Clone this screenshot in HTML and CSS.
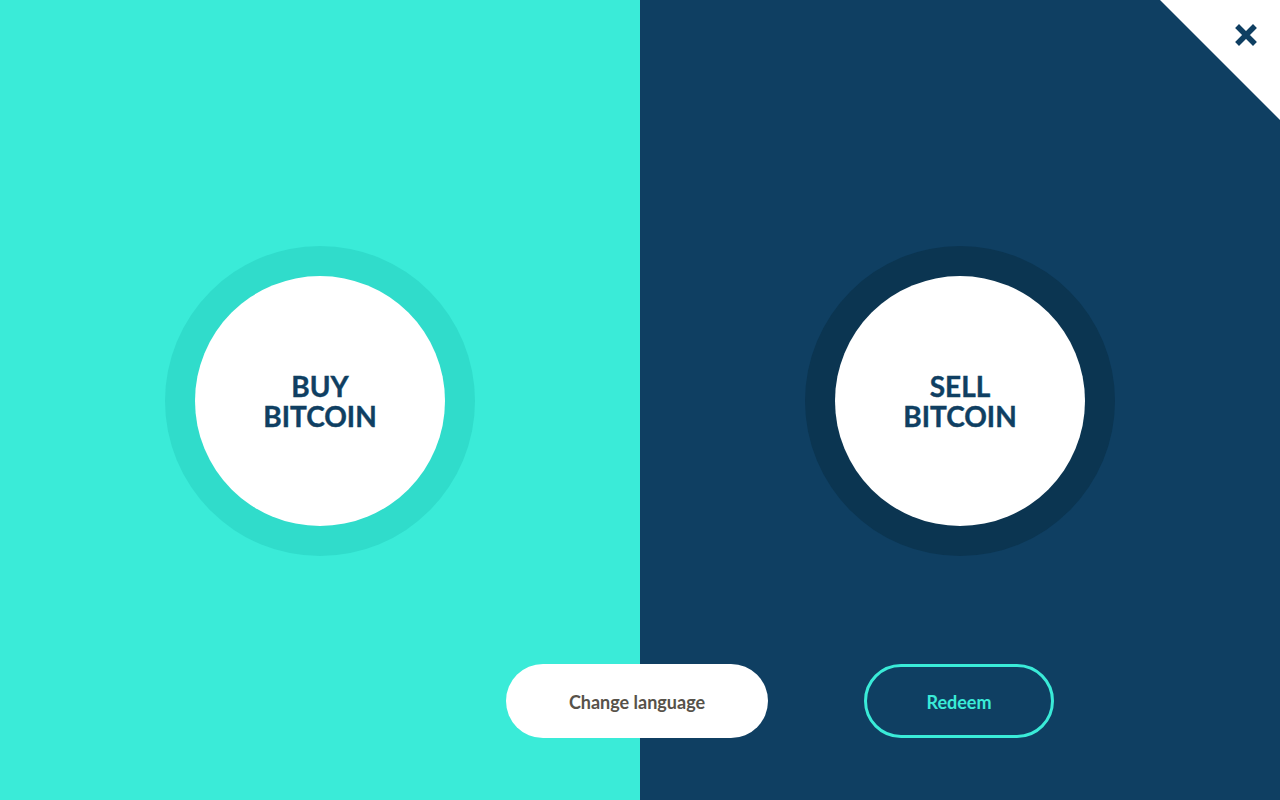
FILE: index.html
```html
<!DOCTYPE html>
<html>
<head>
<meta charset="utf-8">
<link rel="stylesheet" href="styles.css">
</head>
<body>
<div class="screen">
  <section class="panel panel-buy">
    <div class="ring ring-buy">
      <button class="disc"><span class="line">BUY</span><span class="line">BITCOIN</span></button>
    </div>
  </section>
  <section class="panel panel-sell">
    <div class="ring ring-sell">
      <button class="disc"><span class="line">SELL</span><span class="line">BITCOIN</span></button>
    </div>
  </section>
  <div class="corner">
    <svg class="close" viewBox="0 0 24 24" width="24" height="24">
      <path d="M5 5 L19 19 M19 5 L5 19" stroke="#0f3f62" stroke-width="5.5" stroke-linecap="square" fill="none"/>
    </svg>
  </div>
  <div class="actions">
    <button class="btn btn-lang">Change language</button>
    <button class="btn btn-redeem">Redeem</button>
  </div>
</div>
</body>
</html>
```
FILE: styles.css
```css
* { box-sizing: border-box; }
html, body { margin: 0; padding: 0; }
body {
  width: 1280px;
  height: 800px;
  overflow: hidden;
  font-family: "Lato", "Open Sans", sans-serif;
}
.screen {
  position: relative;
  width: 1280px;
  height: 800px;
  display: grid;
  grid-template-columns: 640px 640px;
}
.panel {
  display: flex;
  align-items: center;
  justify-content: center;
  height: 800px;
  padding-top: 1px;
}
.panel-buy { background: #3aebd8; }
.panel-sell { background: #0f3f62; }
.ring {
  width: 310px;
  height: 310px;
  border-radius: 50%;
  display: flex;
  align-items: center;
  justify-content: center;
}
.ring-buy { background: #30dccb; }
.ring-sell { background: #0b3551; }
.disc {
  width: 250px;
  height: 250px;
  border-radius: 50%;
  border: none;
  background: #ffffff;
  color: #0f3f62;
  font-family: "Lato", "Open Sans", sans-serif;
  font-weight: 700;
  font-size: 28px;
  line-height: 30px;
  padding: 0;
  display: flex;
  flex-direction: column;
  align-items: center;
  justify-content: center;
  -webkit-text-stroke: 0.4px #0f3f62;
}
.line {
  display: block;
  height: 30px;
}
.corner {
  position: absolute;
  top: 0;
  right: 0;
  width: 120px;
  height: 120px;
  background: #ffffff;
  clip-path: polygon(0 0, 100% 0, 100% 100%);
}
.close {
  position: absolute;
  top: 23px;
  right: 22px;
}
.actions {
  position: absolute;
  left: 0;
  top: 664px;
  width: 1280px;
  display: flex;
  padding-left: 506px;
  gap: 96px;
}
.btn {
  height: 74px;
  border-radius: 37px;
  font-family: "Lato", "Open Sans", sans-serif;
  font-weight: 700;
  font-size: 18px;
  padding: 0 0 0 0;
  line-height: 20px;
}
.btn-lang {
  width: 262px;
  background: #ffffff;
  border: none;
  color: #57524a;
  padding-top: 2px;
}
.btn-redeem {
  width: 190px;
  background: transparent;
  border: 3px solid #3aebd8;
  color: #3aebd8;
  padding-top: 2px;
}
```
